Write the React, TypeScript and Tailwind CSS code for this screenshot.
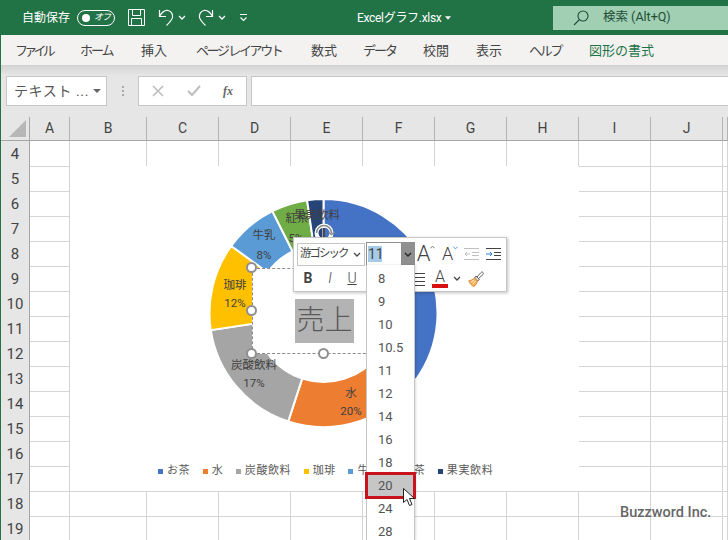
import React from 'react';

const menus = [
  { label: 'ファイル', className: 'w-[65px] tracking-[-3.75px]' },
  { label: 'ホーム', className: 'w-[61px] tracking-[-2px]' },
  { label: '挿入', className: 'w-[55px]' },
  { label: 'ページ レイアウト', className: 'w-[115px] tracking-[-2.4px]' },
  { label: '数式', className: 'w-[52px]' },
  { label: 'データ', className: 'w-[60px] tracking-[-2px]' },
  { label: '校閲', className: 'w-[53px]' },
  { label: '表示', className: 'w-[53px]' },
  { label: 'ヘルプ', className: 'w-[60px] tracking-[-2.3px]' },
  { label: '図形の書式', className: 'w-[70px] text-[#217346]' },
];

const columns = ['A', 'B', 'C', 'D', 'E', 'F', 'G', 'H', 'I', 'J', ''];
const rows = [4, 5, 6, 7, 8, 9, 10, 11, 12, 13, 14, 15, 16, 17, 18, 19];
const sizes = ['8', '9', '10', '10.5', '11', '12', '14', '16', '18', '20', '24', '28'];

const slices = [
  { name: 'お茶', pct: 35, color: '#4472c4' },
  { name: '水', pct: 20, color: '#ed7d31' },
  { name: '炭酸飲料', pct: 17.6, color: '#a5a5a5' },
  { name: '珈琲', pct: 12.4, color: '#ffc000' },
  { name: '牛乳', pct: 7.6, color: '#5b9bd5' },
  { name: '紅茶', pct: 5.1, color: '#70ad47' },
  { name: '果実飲料', pct: 2.3, color: '#264478' },
];

const labels = [
  { text: '紅茶', x: 297, y: 222 },
  { text: '果実飲料', x: 317, y: 219 },
  { text: '5%', x: 296, y: 242 },
  { text: '牛乳', x: 264, y: 239 },
  { text: '8%', x: 264, y: 259 },
  { text: '珈琲', x: 235, y: 289 },
  { text: '12%', x: 235, y: 307 },
  { text: '炭酸飲料', x: 254, y: 369 },
  { text: '17%', x: 254, y: 387 },
  { text: '水', x: 351, y: 397 },
  { text: '20%', x: 351, y: 415 },
];

const CX = 323.5;
const CY = 313;
const OUTER = 114;
const INNER = 69;

const polar = (r: number, pct: number) => {
  const a = (pct / 100) * Math.PI * 2;
  return [CX + r * Math.sin(a), CY - r * Math.cos(a)].map((n) => n.toFixed(2)).join(' ');
};

const slicePath = (from: number, to: number) => {
  const large = to - from > 50 ? 1 : 0;
  return [
    'M', polar(OUTER, from),
    'A', OUTER, OUTER, 0, large, 1, polar(OUTER, to),
    'L', polar(INNER, to),
    'A', INNER, INNER, 0, large, 0, polar(INNER, from),
    'Z',
  ].join(' ');
};

const Chevron = ({ className = '' }: { className?: string }) => (
  <svg viewBox="0 0 8 5" className={'w-[8px] h-[5px] ' + className} fill="none" stroke="currentColor" strokeWidth="1.3">
    <path d="M1 1l3 3 3-3" />
  </svg>
);

const Handle = ({ className }: { className: string }) => (
  <div className={'absolute w-[11px] h-[11px] rounded-full bg-white border-2 border-[#8f8f8f] ' + className} />
);

const TitleBar = () => (
  <div className="h-[35px] shrink-0 bg-[#217346] flex items-center text-white">
    <span className="ml-[21px] w-[55px] text-[12px]">自動保存</span>
    <div className="w-[38px] h-[16px] rounded-full border border-white flex items-center justify-between pl-[4px] pr-[4px]">
      <span className="w-[8px] h-[8px] rounded-full bg-white" />
      <span className="text-[9px] italic tracking-[-1px] leading-none">オフ</span>
    </div>
    <svg viewBox="0 0 17 17" className="ml-[13px] w-[17px] h-[17px]" fill="none" stroke="white" strokeWidth="1">
      <path d="M.5.5h16v16H.5zM4.5.5v6h8v-6M3.5 16.5v-7h10v7" />
    </svg>
    <svg viewBox="0 0 16 18" className="ml-[13px] w-[16px] h-[18px]" fill="none" stroke="white" strokeWidth="1.2">
      <path d="M1.5 1v6.5H8M1.5 7.5C4 3 7 1 10 1.5c3.5.7 5 4 4.500 7-.5 2.500-3 5-6 8" />
    </svg>
    <Chevron className="ml-[4px]" />
    <svg viewBox="0 0 16 18" className="ml-[12px] w-[16px] h-[18px]" fill="none" stroke="white" strokeWidth="1.2">
      <path d="M14.500 1v6.500H8M14.500 7.500C12 3 9 1 6 1.500c-3.500.7-5 4-4.500 7 .5 2.500 3 5 6 8" />
    </svg>
    <Chevron className="ml-[4px]" />
    <svg viewBox="0 0 9 8" className="ml-[13px] w-[9px] h-[8px]" fill="none" stroke="white" strokeWidth="1.1">
      <path d="M1 .5h7M1.500 3.500l3 3 3-3" />
    </svg>
    <span className="ml-[109px] w-[82px] text-[12px] tracking-[-.3px] whitespace-nowrap">Excelグラフ.xlsx</span>
    <svg viewBox="0 0 7 4" className="ml-[6px] w-[6px] h-[4px]" fill="white">
      <path d="M0 0h7L3.500 4z" />
    </svg>
    <div className="ml-[102px] flex-1 h-[24px] bg-[#a0cfb4] flex items-center text-[#1f4e36]">
      <svg viewBox="0 0 16 16" className="ml-[20px] w-[16px] h-[16px]" fill="none" stroke="currentColor" strokeWidth="1.1">
        <circle cx="10" cy="6" r="5" />
        <path d="M6.500 9.500L1 15" />
      </svg>
      <span className="ml-[14px] text-[12.5px]">検索 (Alt+Q)</span>
    </div>
  </div>
);

const MenuBar = () => (
  <div className="h-[30px] shrink-0 bg-[#f3f2f1] flex items-center pl-[14px] pt-[1px] text-[13px] text-[#444]">
    {menus.map((m) => (
      <span key={m.label} className={'shrink-0 whitespace-nowrap ' + m.className}>
        {m.label}
      </span>
    ))}
  </div>
);

const FormulaBar = () => (
  <div className="h-[52px] shrink-0 bg-gradient-to-b from-[#d2d2d2] to-[#e6e6e6] to-20% pt-[11px] flex items-start pl-[5px]">
    <div className="w-[101px] h-[30px] bg-white border border-[#c6c6c6] flex items-center pl-[7px] text-[14px] text-[#555]">
      <span className="tracking-[.6px] whitespace-nowrap">テキスト ...</span>
      <svg viewBox="0 0 8 4" className="ml-[4px] w-[8px] h-[4px]" fill="#666">
        <path d="M0 0h8L4 4z" />
      </svg>
    </div>
    <div className="w-[31px] h-[30px] flex flex-col items-center justify-center gap-[2px]">
      <span className="w-[2px] h-[2px] bg-[#a8a8a8]" />
      <span className="w-[2px] h-[2px] bg-[#a8a8a8]" />
      <span className="w-[2px] h-[2px] bg-[#a8a8a8]" />
    </div>
    <div className="w-[109px] h-[30px] bg-white border border-[#c6c6c6] flex items-center">
      <svg viewBox="0 0 12 12" className="ml-[13px] w-[12px] h-[12px]" fill="none" stroke="#bdbdbd" strokeWidth="1.6">
        <path d="M1 1l10 10M11 1L1 11" />
      </svg>
      <svg viewBox="0 0 14 12" className="ml-[23px] w-[14px] h-[12px]" fill="none" stroke="#bdbdbd" strokeWidth="2">
        <path d="M1 6l4 4 8-9" />
      </svg>
      <span className="ml-[22px] text-[12px] italic font-bold text-[#666] font-['Liberation_Serif',serif]">fx</span>
    </div>
    <div className="ml-[4px] flex-1 h-[30px] bg-white border-y border-l border-[#c6c6c6]" />
  </div>
);

const Chart = () => {
  let acc = 0;
  return (
    <div className="absolute left-[69px] top-[49px] w-[509px] h-[325px] bg-white flex flex-col">
      <svg viewBox="70 166 509 297" className="w-[509px] h-[297px] shrink-0">
        {slices.map((s) => {
          const d = slicePath(acc, acc + s.pct);
          acc += s.pct;
          return <path key={s.name} d={d} fill={s.color} stroke="white" strokeWidth="2" />;
        })}
        {labels.map((l) => (
          <text key={l.text} x={l.x} y={l.y} textAnchor="middle" fontSize="11.5" fill="#404040">
            {l.text}
          </text>
        ))}
      </svg>
      <div className="flex items-center gap-[12.5px] pl-[88px] h-[16px] text-[11px] tracking-[.6px] text-[#595959]">
        {slices.map((s) => (
          <div key={s.name} className="flex items-center gap-[4px] whitespace-nowrap">
            <span className="w-[5px] h-[5px]" style={{ backgroundColor: s.color }} />
            <span>{s.name}</span>
          </div>
        ))}
      </div>
      <div className="absolute left-[182px] top-[102px] w-[144px] h-[86px] bg-white border border-dashed border-[#8a8a8a] flex items-center justify-center">
        <span className="mt-[20px] ml-[1px] w-[59px] h-[44px] bg-[#b3b3b3] text-[28px] leading-[44px] text-center text-[#595959] font-light whitespace-nowrap">
          売上
        </span>
      </div>
      <Handle className="left-[176px] top-[96px]" />
      <Handle className="left-[176px] top-[139px]" />
      <Handle className="left-[176px] top-[182px]" />
      <Handle className="left-[248px] top-[182px]" />
      <svg viewBox="0 0 26 22" className="absolute left-[241px] top-[56px] w-[26px] h-[22px]" fill="none">
        <circle cx="13" cy="11" r="7.5" stroke="white" strokeWidth="4" />
        <path d="M13 3.5a7.500 7.500 0 0 1 7.500 7.500M5.500 11A7.500 7.500 0 0 1 13 3.500" stroke="#8a8a8a" strokeWidth="1.5" />
        <path d="M17.500 10l3 2.500 3-2.500" stroke="#8a8a8a" strokeWidth="1.5" />
        <path d="M13 6v10" stroke="#4a4a4a" strokeWidth="2" />
      </svg>
    </div>
  );
};

const Sheet = () => (
  <div className="relative flex-1 overflow-hidden bg-white">
    <div className="grid grid-cols-[29px_40px_77px_repeat(8,72px)_5px] auto-rows-[25px] text-[#444]">
      <div className="h-[24px] bg-[#e6e6e6] border-r border-b border-[#a6a6a6] relative">
        <div className="absolute right-[3px] bottom-[3px] w-0 h-0 border-l-[17px] border-l-transparent border-b-[17px] border-b-[#b7b7b7]" />
      </div>
      {columns.map((c, i) => (
        <div
          key={i}
          className="h-[24px] bg-[#e6e6e6] border-r border-b border-r-[#b2b2b2] border-b-[#a6a6a6] flex items-center justify-center text-[14px]"
        >
          {c}
        </div>
      ))}
      {rows.map((r) => (
        <React.Fragment key={r}>
          <div className="-mt-px pt-[1px] bg-[#e6e6e6] border-r border-b border-r-[#a6a6a6] border-b-[#b2b2b2] flex items-center justify-center text-[15px]">
            {r}
          </div>
          {columns.map((c, i) => (
            <div key={i} className="-mt-px border-r border-b border-[#d4d4d4]" />
          ))}
        </React.Fragment>
      ))}
    </div>
    <Chart />
  </div>
);

const MiniToolbar = () => (
  <div className="absolute left-[292px] top-[237px] w-[214px] h-[55px] bg-white border border-[#c6c6c6] shadow-[1px_1px_3px_rgba(0,0,0,0.25)] text-[#444]">
    <div className="flex items-center pl-[3px] pt-[4px] h-[28px]">
      <div className="w-[68px] h-[23px] border border-[#c6c6c6] flex items-center pl-[2px] text-[11.5px] tracking-[-2px] whitespace-nowrap">
        <span className="w-[53px]">游ゴシック</span>
        <Chevron />
      </div>
      <div className="ml-[1px] w-[49px] h-[24px] border border-[#8f8f8f] flex items-center">
        <span className="ml-[1px] w-[14px] bg-[#a6cbe9] text-[14px] leading-[16px] text-center">11</span>
        <div className="ml-auto w-[13px] h-full bg-[#8f8f8f] flex items-center justify-center text-[#222]">
          <Chevron />
        </div>
      </div>
      <div className="w-[22px] flex items-start justify-center text-[22px] leading-none font-light">
        A<svg viewBox="0 0 6 4" className="mt-[2px] w-[5px] h-[4px]" fill="none" stroke="#555"><path d="M.5 3.5L3 1l2.5 2.5" /></svg>
      </div>
      <div className="ml-[2px] w-[22px] flex items-start justify-center text-[18px] leading-none font-light">
        A<svg viewBox="0 0 6 4" className="mt-[1px] w-[5px] h-[4px]" fill="none" stroke="#2b7cd3"><path d="M.5.5L3 3l2.5-2.5" /></svg>
      </div>
      <svg viewBox="0 0 15 12" className="ml-[3px] w-[15px] h-[12px]" fill="none" stroke="#c0c0c0">
        <path d="M0 .5h15M8 4.500h7M8 7.500h7M0 11.500h15M1 6h5M3 4L1 6l2 2" />
      </svg>
      <svg viewBox="0 0 15 12" className="ml-[7px] w-[15px] h-[12px]" fill="none" stroke="#444">
        <path d="M0 .5h15M8 4.500h7M8 7.500h7M0 11.500h15" />
        <path d="M0 6h5M4 4l2 2-2 2" stroke="#2b7cd3" />
      </svg>
    </div>
    <div className="flex items-center pl-[3px] h-[25px] text-[14px]">
      <span className="w-[22px] text-center font-bold">B</span>
      <span className="w-[22px] text-center italic font-light">I</span>
      <span className="w-[22px] text-center underline font-light">U</span>
      <span className="w-[47px]" />
      <svg viewBox="0 0 10 14" className="mx-[5px] w-[10px] h-[14px]" fill="none" stroke="#444">
        <path d="M0 1.500h10M0 5.500h10M0 9.500h10M0 13.500h10" />
      </svg>
      <div className="w-[20px] flex flex-col items-center text-[16px] leading-[14px] font-light">
        A
        <span className="w-[16px] h-[4px] bg-[#d81010]" />
      </div>
      <div className="w-[14px] flex justify-center">
        <Chevron />
      </div>
      <svg viewBox="0 0 16 16" className="ml-[4px] w-[16px] h-[16px]">
        <path d="M15 1.500c-.6-.7-1.400-.7-2 0L9 6l1.500 1.500L15 3.500c.5-.6.500-1.400 0-2z" fill="#fff" stroke="#555" strokeWidth=".9" />
        <path d="M8 5L6.500 7l3 3L11.500 8.500z" fill="#ddd" stroke="#555" strokeWidth=".9" />
        <path d="M6.500 7C5 8.500 3 9.500.8 9.800c.7 2.500 2.700 4.700 5.200 5.700 1.800-1.500 3-3.200 3.500-5.500z" fill="#f5b25a" stroke="#d9822b" strokeWidth=".9" />
        <path d="M3 11l3-2M5 13l2.500-3" stroke="#fff" strokeWidth=".8" />
      </svg>
    </div>
  </div>
);

const SizeList = () => (
  <div className="absolute left-[365px] top-[265px] w-[49px] h-[275px] bg-white border-x border-[#c6c6c6] pt-[2px] text-[13px] text-[#555] shadow-[1px_0_2px_rgba(0,0,0,0.15)]">
    {sizes.map((s) => (
      <div key={s} className={'h-[23px] pl-[11px] flex items-center ' + (s === '20' ? 'bg-[#c6c6c6]' : '')}>
        {s}
      </div>
    ))}
  </div>
);

const App: React.FC = () => {
  return (
    <div className="relative w-[728px] h-[540px] overflow-hidden flex flex-col border-l border-[#217346] font-['Roboto','Noto_Sans_CJK_JP',sans-serif]">
      <TitleBar />
      <MenuBar />
      <FormulaBar />
      <Sheet />
      <MiniToolbar />
      <SizeList />
      <div className="absolute left-[364px] top-[472px] w-[51px] h-[27px] border-[3px] border-[#c8141c]" />
      <svg viewBox="0 0 14 20" className="absolute left-[401px] top-[488px] w-[14px] h-[20px]">
        <path d="M1.5.5v14l3.5-3 2.500 6 2.500-1-2.500-6h5z" fill="white" stroke="#222" strokeWidth="1" />
      </svg>
      <span className="absolute left-[619px] top-[502px] text-[14.5px] font-medium text-[#666] [text-shadow:0_0_2px_white]">
        Buzzword Inc.
      </span>
    </div>
  );
};

export default App;
